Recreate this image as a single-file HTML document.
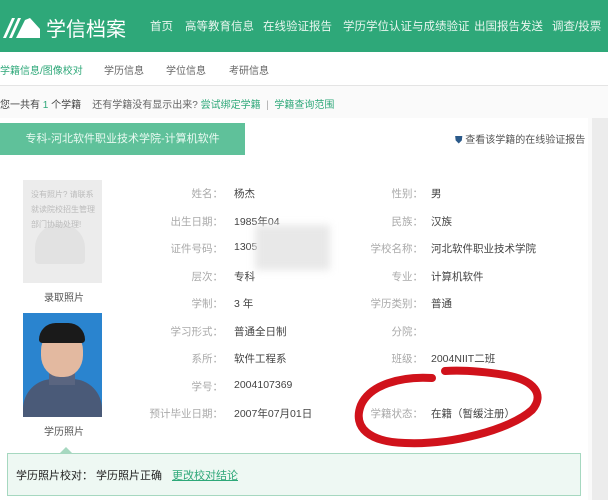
<!DOCTYPE html>
<html><head><meta charset="utf-8"><style>
body{margin:0;width:608px;height:500px;overflow:hidden;background:#fafafa;font-family:"Liberation Sans","Noto Sans CJK SC",sans-serif;position:relative}
.a{position:absolute;white-space:nowrap}
.hdr{position:absolute;left:0;top:0;width:608px;height:52px;background:#2ea879}
.nav{color:#e8f6ef;font-size:11.5px;top:18px}
.sub{position:absolute;left:0;top:52px;width:608px;height:33px;background:#fff;border-bottom:1px solid #e4e4e4}
.l{font-size:10.5px;color:#aaa;text-align:right;width:120px}
.v{font-size:10.5px;color:#444}
</style></head><body>
<div class="hdr"></div>
<svg class="a" style="left:2px;top:15px" width="40" height="24" viewBox="0 0 40 24"><path d="M1 23 L10 3 L13 3 L4 23Z M7 23 L16 3 L19 3 L10 23Z M14 23 L23 5 L28 3 L38 14 L38 23Z" fill="#fff"/></svg>
<div class="a" style="left:46px;top:13px;font-size:20px;color:#fff">学信档案</div>
<div class="a nav" style="left:150px">首页</div>
<div class="a nav" style="left:185px">高等教育信息</div>
<div class="a nav" style="left:263px">在线验证报告</div>
<div class="a nav" style="left:343px">学历学位认证与成绩验证</div>
<div class="a nav" style="left:474px">出国报告发送</div>
<div class="a nav" style="left:552px">调查/投票</div>
<div class="a" style="left:210px;top:46px;width:0;height:0;border:6px solid transparent;border-bottom-color:#fff"></div>
<div class="sub"></div>
<div class="a" style="left:0;top:62px;font-size:10px;color:#2ea879">学籍信息/图像校对</div>
<div class="a" style="left:104px;top:62px;font-size:10px;color:#666">学历信息</div>
<div class="a" style="left:166px;top:62px;font-size:10px;color:#666">学位信息</div>
<div class="a" style="left:229px;top:62px;font-size:10px;color:#666">考研信息</div>
<div class="a" style="left:0;top:96px;font-size:10px;color:#444">您一共有 <span style="color:#2ea879">1</span> 个学籍 &nbsp;&nbsp; <span style="color:#666">还有学籍没有显示出来?</span> <span style="color:#2ea879">尝试绑定学籍</span> &nbsp;<span style="color:#aaa">|</span>&nbsp; <span style="color:#2ea879">学籍查询范围</span></div>
<div class="a" style="left:0;top:118px;width:588px;height:382px;background:#fff"></div>
<div class="a" style="left:592px;top:118px;width:16px;height:382px;background:#ececec"></div>
<div class="a" style="left:0;top:123px;width:245px;height:32px;background:#5fc19a;color:#eafaf2;font-size:11px;line-height:32px;text-align:center">专科-河北软件职业技术学院-计算机软件</div>
<div class="a" style="left:455px;top:131px;font-size:10px;color:#555"><span style="color:#2b5a8a">⛊</span> 查看该学籍的在线验证报告</div>
<div class="a" style="left:23px;top:180px;width:79px;height:103px;background:#ececec"></div>
<div class="a" style="left:35px;top:224px;width:50px;height:40px;border-radius:24px 24px 4px 4px;background:#e2e2e2"></div>
<div class="a" style="left:31px;top:187px;font-size:8px;line-height:15px;color:#bbb;white-space:normal;width:66px">没有照片? 请联系就读院校招生管理部门协助处理!</div>
<div class="a" style="left:44px;top:289px;font-size:10px;color:#555">录取照片</div>
<div class="a" style="left:23px;top:313px;width:79px;height:104px;background:#2a84cf;overflow:hidden">
<div class="a" style="left:0;top:66px;width:79px;height:40px;background:#4a5a78;border-radius:30px 30px 0 0"></div>
<div class="a" style="left:26px;top:56px;width:26px;height:16px;background:#5a6580"></div>
<div class="a" style="left:18px;top:16px;width:42px;height:48px;background:#e3b9a0;border-radius:45%"></div>
<div class="a" style="left:16px;top:10px;width:46px;height:20px;background:#1a1a1a;border-radius:20px 20px 4px 4px"></div>
</div>
<div class="a" style="left:44px;top:423px;font-size:10px;color:#555">学历照片</div>
<div class="a l" style="left:103px;top:186px">姓名：</div><div class="a v" style="left:234px;top:186px">杨杰</div>
<div class="a l" style="left:103px;top:214px">出生日期：</div><div class="a v" style="left:234px;top:214px">1985年04</div>
<div class="a l" style="left:103px;top:241px">证件号码：</div><div class="a v" style="left:234px;top:241px">1305</div>
<div class="a" style="left:255px;top:225px;width:75px;height:45px;background:#e8e8e8;filter:blur(4px)"></div>
<div class="a l" style="left:103px;top:269px">层次：</div><div class="a v" style="left:234px;top:269px">专科</div>
<div class="a l" style="left:103px;top:296px">学制：</div><div class="a v" style="left:234px;top:296px">3 年</div>
<div class="a l" style="left:103px;top:324px">学习形式：</div><div class="a v" style="left:234px;top:324px">普通全日制</div>
<div class="a l" style="left:103px;top:351px">系所：</div><div class="a v" style="left:234px;top:351px">软件工程系</div>
<div class="a l" style="left:103px;top:379px">学号：</div><div class="a v" style="left:234px;top:379px">2004107369</div>
<div class="a l" style="left:103px;top:406px">预计毕业日期：</div><div class="a v" style="left:234px;top:406px">2007年07月01日</div>
<div class="a l" style="left:303px;top:186px">性别：</div><div class="a v" style="left:431px;top:186px">男</div>
<div class="a l" style="left:303px;top:214px">民族：</div><div class="a v" style="left:431px;top:214px">汉族</div>
<div class="a l" style="left:303px;top:241px">学校名称：</div><div class="a v" style="left:431px;top:241px">河北软件职业技术学院</div>
<div class="a l" style="left:303px;top:269px">专业：</div><div class="a v" style="left:431px;top:269px">计算机软件</div>
<div class="a l" style="left:303px;top:296px">学历类别：</div><div class="a v" style="left:431px;top:296px">普通</div>
<div class="a l" style="left:303px;top:324px">分院：</div>
<div class="a l" style="left:303px;top:351px">班级：</div><div class="a v" style="left:431px;top:351px">2004NIIT二班</div>
<div class="a l" style="left:303px;top:406px">学籍状态：</div><div class="a v" style="left:431px;top:406px">在籍（暂缓注册）</div>
<div class="a" style="left:7px;top:453px;width:572px;height:41px;background:#eef8f3;border:1px solid #a6d8c0"></div>
<div class="a" style="left:60px;top:447px;width:0;height:0;border:6px solid transparent;border-top:0;border-bottom-color:#a6d8c0"></div>
<div class="a" style="left:16px;top:467px;font-size:11px;color:#222">学历照片校对： 学历照片正确</div>
<div class="a" style="left:172px;top:467px;font-size:11px;color:#2ea879;text-decoration:underline">更改校对结论</div>
<svg class="a" style="left:0;top:0" width="608" height="500"><path d="M432 378 C400 376 370 385 361 405 C352 428 370 442 405 443 C450 445 510 430 532 410 C545 395 535 380 505 375 C480 371 460 370 445 371" fill="none" stroke="#d0121b" stroke-width="8" stroke-linecap="round"/></svg>
</body></html>
